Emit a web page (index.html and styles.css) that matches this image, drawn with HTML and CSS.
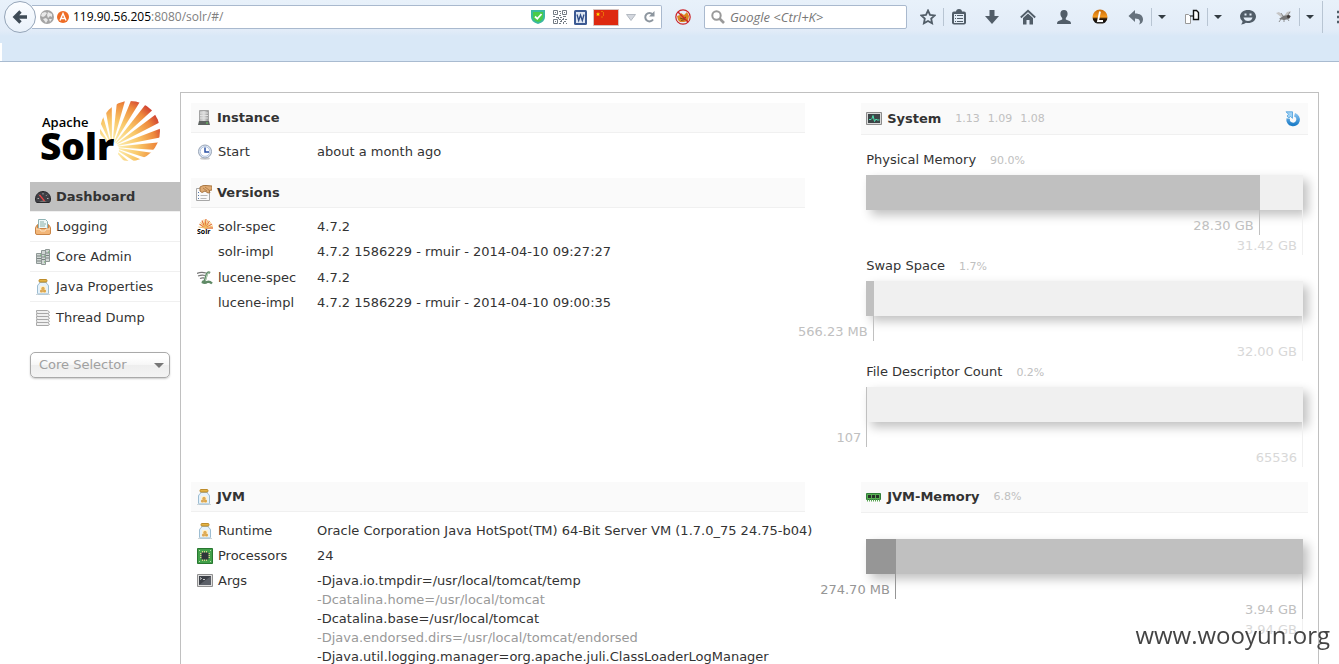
FILE: index.html
```html
<!DOCTYPE html>
<html lang="en">
<head>
<meta charset="utf-8">
<title>Solr Admin</title>
<link rel="stylesheet" href="styles.css">
</head>
<body>
<svg class="defs" aria-hidden="true">
  <defs>
    <linearGradient id="orangeBall" x1="0" y1="0" x2="0" y2="1"><stop offset="0" stop-color="#c86a08"/><stop offset=".5" stop-color="#f59a20"/><stop offset=".62" stop-color="#2a1605"/><stop offset=".85" stop-color="#111"/><stop offset="1" stop-color="#ddd"/></linearGradient>
    <linearGradient id="blueRing" x1="0" y1="0" x2="0" y2="1"><stop offset="0" stop-color="#7fbcec"/><stop offset="1" stop-color="#1f7fc9"/></linearGradient>
    <linearGradient id="server" x1="0" y1="0" x2="1" y2="0"><stop offset="0" stop-color="#b5b5b5"/><stop offset=".5" stop-color="#dedede"/><stop offset="1" stop-color="#8d8d8d"/></linearGradient>
  </defs>
  <symbol id="i-jar" viewBox="0 0 16 16"><path d="M1 15.500h14" stroke="#cfd6da"/><path d="M4.500 3.500h7v1q2 1 2 2.500v7q0 1-1 1h-9q-1 0-1-1V7q0-1.500 2-2.500z" fill="#e6f2fa" stroke="#9dbdd2"/><rect x="4" y=".5" width="8" height="2.500" rx="1" fill="#e3b345" stroke="#bd8c2b"/><path d="M5 7h6v7H5z" fill="#fff3d3"/><circle cx="8" cy="9.500" r="1.700" fill="#dfad55"/><circle cx="6.500" cy="12" r="1.600" fill="#d9a75a"/><circle cx="9.500" cy="12" r="1.600" fill="#dba64a"/></symbol>
  <symbol id="i-dash" viewBox="0 0 16 16"><path d="M.5 10C.5 5.500 4 2.500 8 2.500s7.500 3 7.500 7.500c0 2-.6 3.500-1.500 3.500H2C1.100 13.500.5 12 .5 10z" fill="#3f3f45" stroke="#28282c"/><path d="M2.500 9.500h1.500M12 9.500h1.500M8 4v1.500M4 5.800l1 1M12 5.800l-1 1" stroke="#aaa"/><path d="M4 13q4-3 8 0" fill="#777"/><path d="M4.500 6l5 6" stroke="#e44" stroke-width="1.200"/></symbol>
  <symbol id="i-log" viewBox="0 0 16 16"><path d="M3.500 .5h7l2 2v8h-9z" fill="#eef8f8" stroke="#8fb3b5"/><path d="M5 3h4M5 5h6M5 7h5" stroke="#8ab0a8"/><path d="M.5 8.500l2-3v4h11v-4l2 3v5.500q0 1.500-1.500 1.500H2Q.5 15.500.5 14z" fill="#f2b679" stroke="#c98547"/><path d="M1 10h4l1 2h4l1-2h4" fill="none" stroke="#fbe3c5"/></symbol>
  <symbol id="i-cores" viewBox="0 0 16 16"><g fill="#d0d6d4" stroke="#8f9896"><path d="M6.500 1.500h4v12h-4zM10.500 .5h4v12h-4zM1.500 4.500h5v10h-5z"/><path d="M6.500 5.500h4v10h-4z"/></g><path d="M2 7h4M2 9.500h4M2 12h4M7 8h3M7 10.500h3M11 4h3M11 6.500h3M11 9h3" stroke="#7a8381"/><path d="M5 6h1M9 7h1M9 13h1M13 3h1" stroke="#63b463"/></symbol>
  <symbol id="i-thread" viewBox="0 0 16 16"><g fill="#f0f0f0" stroke="#a8a8a8"><path d="M1.500 .5h11l2 1.500-1 1.500h-11l-1-1.500z"/><path d="M1.500 3.500h11l2 1.500-1 1.500h-11l-1-1.500z"/><path d="M1.500 6.500h11l2 1.500-1 1.500h-11l-1-1.500z"/><path d="M1.500 9.500h11l2 1.500-1 1.500h-11l-1-1.500z"/><path d="M1.500 12.500h11l2 1.500-1 1.500h-12z"/></g></symbol>
  <symbol id="i-server" viewBox="0 0 16 16"><path d="M3.500 .5h9v12h-9z" fill="url(#server)" stroke="#a4a4a4"/><path d="M4 3h8M4 5.500h8M4 8h8" stroke="#e2e2e2"/><path d="M3 11h10l1 4H2z" fill="#5e6361"/><path d="M10 13h2" stroke="#64d35c"/></symbol>
  <symbol id="i-clock" viewBox="0 0 16 16"><ellipse cx="8" cy="14.500" rx="5" ry="1.200" fill="#ccc"/><circle cx="8" cy="7.500" r="6.500" fill="#dfe9f7" stroke="#98a4b5"/><circle cx="8" cy="7.500" r="4.800" fill="#fff" stroke="#b7c6dd"/><path d="M8 3.500v4.500h4" fill="none" stroke="#2a50a4" stroke-width="1.500"/></symbol>
  <symbol id="i-versions" viewBox="0 0 16 16"><path d="M.5 3.500h13v12H.5z" fill="#fafafa" stroke="#a7a7a7"/><path d="M2 7.500h1M2 10.500h1M2 13.500h1" stroke="#57a"/><path d="M4.500 10.500h7M4.500 13.500h6" stroke="#b9b9b9"/><path d="M4 2q3-2 6-1.500l6 .5v4l-3 .5 1 2-2 .5-3-2-3 1.500-2-1.500z" fill="#dfab74" stroke="#a87642"/><path d="M7 3l4 3M9 2l4 3" stroke="#a87642" stroke-width=".8"/></symbol>
  <symbol id="i-lucene" viewBox="0 0 16 16"><path d="M0 3.500q4-2 9-.5M1 6q4-1.500 7-.5M3 8.500q2-1 4-.5" fill="none" stroke="#777" stroke-width="1.300"/><path d="M13 3q-2.500-1.500-3.500 2L8 10q-.5 2-3 2 3 1.500 5 0 2.500-1 5 1.500" fill="none" stroke="#5f8a66" stroke-width="2.400"/><path d="M12.500 3q-2-.5-2.500 2L8.500 10.500" fill="none" stroke="#cfe3d1" stroke-width=".8"/></symbol>
  <symbol id="i-cpu" viewBox="0 0 16 16"><path d="M.5 .5h15v15H.5z" fill="#42a04a" stroke="#287730"/><path d="M3 5.500h10M3 7.500h10M3 9.500h10M5.500 3v10M7.500 3v10M9.500 3v10" stroke="#d8d28a"/><path d="M4.500 4.500h7v7h-7z" fill="#30353a"/><path d="M2 2.500h1M13 2.500h1M2 13.500h1M13 13.500h1" stroke="#b5e3ad"/></symbol>
  <symbol id="i-term" viewBox="0 0 16 16"><path d="M.5 1.500h15v12H.5z" fill="#dedede" stroke="#919191"/><path d="M2 3h12v9H2z" fill="#3d4148"/><path d="M2 12L14 3v9z" fill="#5c6068"/><path d="M3 4.500l1.500 1L3 6.500M6 6.500h2" fill="none" stroke="#eee" stroke-width=".8"/></symbol>
  <symbol id="i-system" viewBox="0 0 16 16"><path d="M.5 1.500h15v12H.5z" fill="#dadada" stroke="#8b8b8b"/><path d="M2 3h12v9H2z" fill="#3d4548"/><path d="M3 8.500h2l1-1 1-3 1.500 6L10 8l1 1h2.500" fill="none" stroke="#4fe0b0"/></symbol>
  <symbol id="i-ram" viewBox="0 0 16 16"><path d="M.5 4.500h14v6H.5z" fill="#58ac53" stroke="#32803a"/><path d="M2 6h3v3H2zM6 6h3v3H6zM10 6h3v3h-3z" fill="#263128"/><path d="M1 11.500h14" stroke="#56a54f" stroke-width="2" stroke-dasharray="1 1"/></symbol>
  <symbol id="i-caret" viewBox="0 0 8 5"><path d="M0 0h8L4 4z" fill="#333c42"/></symbol>
</svg>

<header class="browser">
  <div class="toolbar">
    <button class="back" aria-label="Back"><svg viewBox="0 0 16 16"><path d="M15 8H3M8.500 2.500L3 8l5.500 5.500" fill="none" stroke="#3f4b56" stroke-width="3.400"/></svg></button>
    <div class="address">
      <svg class="s14" viewBox="0 0 14 14"><circle cx="7" cy="7" r="7" fill="#a4a4a4"/><path d="M2 3l3-1 2 1-2 3-2 1-2-1zM8 2l4 2v3l-2-1-2 2-1-3zM3 9l3-1 2 2-2 3zM9 9h3l-2 3z" fill="#e8e8e8"/></svg>
      <svg class="s12" viewBox="0 0 12 12"><circle cx="6" cy="6" r="6" fill="#ee6c25"/><path d="M3 9.500L6 2.500l3 7M4.500 7.500h3" fill="none" stroke="#fff" stroke-width="1.400"/></svg>
      <div class="url" role="textbox" contenteditable="true" spellcheck="false" aria-label="Address">119.90.56.205<span class="path">:8080/solr/#/</span></div>
      <svg class="s14" viewBox="0 0 14 14"><path d="M0 0h14v7q0 5-7 7-7-2-7-7z" fill="#3ab8a0"/><path d="M2 2h10v5q0 3.500-5 5-5-1.500-5-5z" fill="#4acb49"/><path d="M4 6.500l2.300 2.300L10.500 4" fill="none" stroke="#fff" stroke-width="1.800"/></svg>
      <svg class="s14 qr" viewBox="0 0 14 14"><g fill="none" stroke="#737b83"><path d="M.5 .5h4v4h-4zM9.500 .5h4v4h-4zM.5 9.500h4v4h-4z"/><path d="M2 2.500h1M11 2.500h1M2 11.500h1M6 1.500h2M7 3.500h1M6 5.500h2M0 6.500h2M3 7.500h3M7 7.500h2M10 6.500h3M6 9.500h2M9 9.500h2M12 9.500h2M7 11.500h2M11 11.500h2M6 13.500h2M10 13.500h1M13 13.500h1M10 8.500h1M5 8.500h1M8 10.500h1M10 12.500h1"/></g></svg>
      <svg class="word" viewBox="0 0 13 15"><rect width="13" height="15" rx="1.500" fill="#3c5a93"/><path d="M2 2h9v11H2z" fill="#dfe7f3"/><path d="M3 4.500l1.700 6L6.500 5l1.800 5.500 1.700-6" fill="none" stroke="#2f4d87" stroke-width="1.300"/></svg>
      <svg class="flag" viewBox="0 0 26 17"><path d="M.5 .5h25v16H.5z" fill="#de2910" stroke="#d6c4c2"/><path d="M5 3l.6 1.400H7L6 5.500l.4 1.500L5 6.200 3.600 7 4 5.500 3 4.400h1.400z" fill="#ffde00"/><path d="M8.500 2.500h1M10 4h1M10 6h1M8.500 8h1" stroke="#f5b400"/></svg>
      <svg class="drop" viewBox="0 0 10 7"><path d="M.5 .5h9L5 6.500z" fill="#d3d7de" stroke="#b4bac2"/></svg>
      <svg class="s12" viewBox="0 0 12 12"><path d="M9.500 3.300A4.200 4.200 0 1 0 10 8.500" fill="none" stroke="#8d969f" stroke-width="2"/><path d="M11.500 0v5.500H6z" fill="#8d969f"/></svg>
    </div>
    <button class="tool block" aria-label="Blocked content"><svg class="s16" viewBox="0 0 16 16"><path d="M2 7l3-1 1-2 3 2 3-3 2 4-1 5-4 1H5l-2-2z" fill="#dd851f"/><path d="M5 9l3 1 3-2M6 11.500l4-1" stroke="#7a4a19" fill="none"/><circle cx="8" cy="8" r="7.200" fill="none" stroke="#cb2229" stroke-width="1.200"/><path d="M3 3l10 10" stroke="#cb2229" stroke-width="1.400"/></svg></button>
    <label class="search"><svg class="s14" viewBox="0 0 14 14"><circle cx="5.500" cy="5.500" r="4.200" fill="none" stroke="#999" stroke-width="2"/><path d="M8.500 8.500L13 13" stroke="#999" stroke-width="2.600"/></svg><input type="text" placeholder="Google &lt;Ctrl+K&gt;" aria-label="Search"></label>
    <div class="group first">
      <button class="tool" aria-label="Bookmark"><svg class="s16" viewBox="0 0 16 16"><path d="M8 1.500l2 4.300 4.700.6-3.500 3.200.9 4.700L8 12l-4.100 2.300.9-4.700L1.300 6.400 6 5.800z" fill="none" stroke="#515d68" stroke-width="1.800"/></svg></button>
      <i class="rule"></i>
      <button class="tool" aria-label="Bookmarks list"><svg class="s16" viewBox="0 0 16 16"><rect x="1" y="2.500" width="14" height="13" rx="2" fill="#515d68"/><path d="M5 3q0-3 3-3t3 3z" fill="#515d68"/><path d="M3 5h10v9H3z" fill="#e3edf7"/><path d="M4 6.500h1M6 6.500h6M4 9.500h1M6 9.500h6M4 12.500h1M6 12.500h6" stroke="#515d68"/></svg></button>
    </div>
    <button class="tool wide" aria-label="Downloads"><svg class="s16" viewBox="0 0 16 16"><path d="M5.500 1h5v6H15l-7 8-7-8h4.500z" fill="#515d68"/></svg></button>
    <button class="tool wide" aria-label="Home"><svg class="s16" viewBox="0 0 16 16"><path d="M.8 8.500L8 1.800l7.200 6.700" fill="none" stroke="#515d68" stroke-width="1.800"/><path d="M3 9l5-4.500L13 9v6.500H9.500V11h-3v4.500H3z" fill="#515d68"/></svg></button>
    <button class="tool wide" aria-label="Account"><svg class="s16" viewBox="0 0 16 16"><path d="M8 1c2.500 0 3.600 1.500 3.600 3.700 0 2-1 3.300-1.800 4.300v1.500l4.200 1.700q1 .5 1 2.800H1q0-2.300 1-2.800l4.200-1.700V9C5.400 8 4.400 6.700 4.400 4.700 4.400 2.500 5.500 1 8 1z" fill="#515d68"/></svg></button>
    <button class="tool wide" aria-label="Extension"><svg class="s16" viewBox="0 0 16 16"><circle cx="8" cy="8" r="7.500" fill="url(#orangeBall)"/><path d="M8 2.500L6 12h5" fill="none" stroke="#fff" stroke-width="1.800"/></svg></button>
    <div class="group split">
      <button class="tool" aria-label="Undo"><svg class="s16" viewBox="0 0 16 16"><path d="M7 1v3.500c5 0 8 2 8 6 0 2.500-1.500 4.500-4 5 2-3 1-6-4-6V13L.5 7z" fill="#66727d"/></svg></button>
      <i class="rule"></i>
      <button class="tool caret" aria-label="Undo list"><svg viewBox="0 0 8 5"><use href="#i-caret"/></svg></button>
    </div>
    <div class="group split">
      <button class="tool" aria-label="Proxy"><svg class="s16" viewBox="0 0 16 16"><path d="M1.500 5.500h3l2 2v7h-5z" fill="#fff" stroke="#999"/><path d="M9.500 1.500h3l2 2v7h-5z" fill="#fff" stroke="#111" stroke-width="1.400"/><path d="M6 7h3" stroke="#222" stroke-width="1.200"/></svg></button>
      <i class="rule"></i>
      <button class="tool caret" aria-label="Proxy list"><svg viewBox="0 0 8 5"><use href="#i-caret"/></svg></button>
    </div>
    <button class="tool wide" aria-label="Chat"><svg class="s16" viewBox="0 0 16 16"><path d="M8 1c4.500 0 8 2.700 8 6.500S12.500 14 8 14q-1 0-2-.2Q4 15.500 1 15.500 2.500 14 2.500 12.300 0 10.500 0 7.500C0 3.700 3.500 1 8 1z" fill="#515d68"/><path d="M4.500 5.500h2M9.500 5.500h2" stroke="#e3edf7" stroke-width="2"/><path d="M3.500 8.500h9q-1 3.500-4.500 3.500T3.500 8.500z" fill="#e3edf7"/></svg></button>
    <div class="group split">
      <button class="tool" aria-label="Fly"><svg class="s16" viewBox="0 0 16 16"><path d="M5 8L0 4l3-1 5 4zM8 7l3-4 4-1-4 6z" fill="#c5c5c5"/><path d="M3 10l4-3 5-1 3 1-2 3-5 1z" fill="#777"/><path d="M5 10l-2 3M8 10v3M11 9l2 3M7 7L5 4M12 6l2-3" stroke="#777" stroke-width=".8"/><circle cx="12.500" cy="7.500" r="1.600" fill="#3f3a38"/></svg></button>
      <i class="rule"></i>
      <button class="tool caret" aria-label="Fly list"><svg viewBox="0 0 8 5"><use href="#i-caret"/></svg></button>
    </div>
    <i class="rule tall"></i>
    <button class="tool menu-button" aria-label="Menu"><svg class="s16" viewBox="0 0 16 16"><path d="M0 3h16M0 8h16M0 13h16" stroke="#515d68" stroke-width="2.400"/></svg></button>
  </div>
</header>

<main class="page">
  <aside class="sidebar">
    <svg class="logo" viewBox="0 0 150 72" role="img" aria-label="Apache Solr">
      <defs>
        <clipPath id="sun"><circle cx="100" cy="39" r="30"/></clipPath>
        <radialGradient id="heat" gradientUnits="userSpaceOnUse" cx="82" cy="55" r="58"><stop offset=".1" stop-color="#fdeeb0"/><stop offset=".45" stop-color="#f9c869"/><stop offset=".75" stop-color="#ee8a3c"/><stop offset="1" stop-color="#c5252d"/></radialGradient>
        <path id="ray" d="M82 55l75-6.200v12.400z"/>
        <mask id="rays" maskUnits="userSpaceOnUse" x="0" y="0" width="150" height="72">
          <g fill="#fff">
            <use href="#ray" transform="rotate(-128 82 55)"/><use href="#ray" transform="rotate(-111 82 55)"/><use href="#ray" transform="rotate(-95 82 55)"/><use href="#ray" transform="rotate(-79 82 55)"/><use href="#ray" transform="rotate(-63 82 55)"/><use href="#ray" transform="rotate(-47 82 55)"/><use href="#ray" transform="rotate(-32 82 55)"/><use href="#ray" transform="rotate(-16 82 55)"/><use href="#ray" transform="rotate(-1 82 55)"/><use href="#ray" transform="rotate(13 82 55)"/><use href="#ray" transform="rotate(28 82 55)"/><use href="#ray" transform="rotate(45 82 55)"/>
          </g>
          <circle cx="80" cy="58" r="9" fill="#000"/>
        </mask>
      </defs>
      <g clip-path="url(#sun)"><path d="M68 5h66v66H68z" fill="url(#heat)" mask="url(#rays)"/></g>
      <text class="logo-top" x="12" y="35">Apache</text>
      <text class="logo-name" x="10" y="68">Solr</text>
    </svg>
    <nav class="menu">
      <a href="#" class="active"><svg class="s16"><use href="#i-dash"/></svg>Dashboard</a>
      <a href="#"><svg class="s16"><use href="#i-log"/></svg>Logging</a>
      <a href="#"><svg class="s16"><use href="#i-cores"/></svg>Core Admin</a>
      <a href="#"><svg class="s16"><use href="#i-jar"/></svg>Java Properties</a>
      <a href="#"><svg class="s16"><use href="#i-thread"/></svg>Thread Dump</a>
    </nav>
    <div class="selector"><select aria-label="Core Selector"><option>Core Selector</option></select></div>
  </aside>

  <div class="content">
    <div class="upper-left">
      <section>
        <h2><svg class="s16"><use href="#i-server"/></svg>Instance</h2>
        <dl><dt><svg class="s16"><use href="#i-clock"/></svg>Start</dt><dd>about a month ago</dd></dl>
      </section>
      <section>
        <h2><svg class="s16"><use href="#i-versions"/></svg>Versions</h2>
        <dl><dt><svg class="s16" viewBox="0 0 16 16"><path d="M8 9L2.500 5M8 9L5 1.500M8 9l1-9M8 9l4.500-7M8 9l7-4M8 9l8 0" stroke="#e57a3c" stroke-width="1.300"/><path d="M8 9L1.500 8M8 9L3.500 3M8 9L7 .5M8 9l3-8M8 9l6-5.500M8 9l8-2" stroke="#f2bd64"/><text class="mini-solr" x="0" y="15">Solr</text></svg>solr-spec</dt><dd>4.7.2</dd>
        <dt><span class="s16"></span>solr-impl</dt><dd>4.7.2 1586229 - rmuir - 2014-04-10 09:27:27</dd></dl>
        <dl><dt><svg class="s16"><use href="#i-lucene"/></svg>lucene-spec</dt><dd>4.7.2</dd>
        <dt><span class="s16"></span>lucene-impl</dt><dd>4.7.2 1586229 - rmuir - 2014-04-10 09:00:35</dd></dl>
      </section>
    </div>

    <section class="gauges">
      <h2><svg class="s16"><use href="#i-system"/></svg>System<small><span>1.13</span><span>1.09</span><span>1.08</span></small>
        <button class="reload" aria-label="Reload"><svg class="s16" viewBox="0 0 16 16"><path d="M9.500 3.700A5 5 0 1 1 3.200 7.500" fill="none" stroke="url(#blueRing)" stroke-width="3.600"/><path d="M1 .8h6.500v6.500L5.500 5.500 3.800 7 2 5l1.500-1.700z" fill="#9fd2f5" stroke="#4b9edb" stroke-width=".8"/></svg></button></h2>
      <div class="gauge">
        <h3>Physical Memory<small>90.0%</small></h3>
        <div class="bar"><div class="used" style="width:90.07%"></div></div>
        <div class="marks"><div class="mark total"><span>31.42 GB</span></div><div class="mark" style="width:90.07%"><span>28.30 GB</span></div></div>
      </div>
      <div class="gauge">
        <h3>Swap Space<small>1.7%</small></h3>
        <div class="bar"><div class="used" style="width:1.73%"></div></div>
        <div class="marks"><div class="mark total"><span>32.00 GB</span></div><div class="mark" style="width:1.73%"><span>566.23 MB</span></div></div>
      </div>
      <div class="gauge">
        <h3>File Descriptor Count<small>0.2%</small></h3>
        <div class="bar"><div class="used" style="width:0.16%"></div></div>
        <div class="marks"><div class="mark total"><span>65536</span></div><div class="mark" style="width:0.16%"><span>107</span></div></div>
      </div>
    </section>

    <section class="jvm">
      <h2><svg class="s16"><use href="#i-jar"/></svg>JVM</h2>
      <dl><dt><svg class="s16"><use href="#i-jar"/></svg>Runtime</dt><dd>Oracle Corporation Java HotSpot(TM) 64-Bit Server VM (1.7.0_75 24.75-b04)</dd>
      <dt><svg class="s16"><use href="#i-cpu"/></svg>Processors</dt><dd>24</dd>
      <dt><svg class="s16"><use href="#i-term"/></svg>Args</dt>
      <dd><ul><li>-Djava.io.tmpdir=/usr/local/tomcat/temp</li><li>-Dcatalina.home=/usr/local/tomcat</li><li>-Dcatalina.base=/usr/local/tomcat</li><li>-Djava.endorsed.dirs=/usr/local/tomcat/endorsed</li><li>-Djava.util.logging.manager=org.apache.juli.ClassLoaderLogManager</li></ul></dd></dl>
    </section>

    <section class="gauges memory">
      <h2><svg class="s16"><use href="#i-ram"/></svg>JVM-Memory<small>6.8%</small></h2>
      <div class="gauge">
        <div class="bar"><div class="used" style="width:6.81%"></div></div>
        <div class="marks"><div class="mark max"><span>3.94 GB</span></div><div class="mark total"><span>3.94 GB</span></div><div class="mark" style="width:6.81%"><span>274.70 MB</span></div></div>
      </div>
    </section>
  </div>
</main>
<div class="watermark">www.wooyun.org</div>
</body>
</html>
```

FILE: styles.css
```css
* { box-sizing: border-box; }
html, body { height: 100%; }
body {
  margin: 0;
  display: flex;
  flex-direction: column;
  overflow: hidden;
  background: #fff;
  color: #333;
  font: 13px/20px Verdana, "DejaVu Sans", sans-serif;
}
h2, h3, dl, dd, ul { margin: 0; padding: 0; }
ul { list-style: none; }
button { border: 0; padding: 0; background: none; }
svg { display: block; flex: none; }
.defs { position: absolute; width: 0; height: 0; }
.s16 { width: 16px; height: 16px; flex: none; }
.s14 { width: 14px; height: 14px; }
.s12 { width: 12px; height: 12px; }

/* Browser chrome */
.browser {
  flex: none;
  padding: 1px 0 28px;
  border-bottom: 1px solid #a9bbd0;
  background:
    linear-gradient(#fff, #fff) 0 100% / 2px 18px no-repeat,
    linear-gradient(#e8f1fa, #e2ecf8 30px, #d9e8f7 36px, #d9e8f7);
  font-family: "Segoe UI", "Open Sans", sans-serif;
}
.toolbar { display: flex; align-items: center; height: 32px; padding-left: 4px; overflow: hidden; }
.back {
  display: grid; place-items: center;
  width: 32px; height: 32px;
  flex: none;
  z-index: 1;
  border: 1px solid #95a5b8;
  border-radius: 50%;
  background: linear-gradient(#fbfdff, #e9f1fa);
}
.back svg { width: 16px; height: 16px; }
.address {
  display: flex; align-items: center;
  flex: 1;
  height: 24px;
  margin-left: -4px;
  padding: 0 6px 0 8px;
  border: 1px solid #a9b9ce;
  border-left: 0;
  border-radius: 0 2px 2px 0;
  background: #fff;
}
.address .s12 { margin-left: 3px; }
.url { flex: 1; padding-left: 4px; color: #000; font-size: 12px; outline: 0; white-space: nowrap; }
.path { color: #808080; }
.address .qr { margin-left: 8px; }
.word { width: 13px; height: 15px; margin-left: 7px; }
.flag { width: 26px; height: 17px; margin-left: 6px; }
.drop { width: 10px; height: 7px; margin: 0 4px 0 7px; }
.tool { display: grid; place-items: center; width: 30px; height: 28px; flex: none; }
.wide { width: 36px; }
.block { width: 42px; }
.search {
  display: flex; align-items: center;
  width: 203px; height: 24px;
  flex: none;
  padding: 0 6px;
  border: 1px solid #a9b9ce;
  border-radius: 2px;
  background: #fff;
}
.search input {
  width: 100%;
  min-width: 0;
  padding: 0 0 0 5px;
  border: 0;
  outline: 0;
  background: none;
  font: italic 13px/20px "Segoe UI", "Open Sans", sans-serif;
}
.search input::placeholder { color: #777; }
.group { display: flex; align-items: center; flex: none; }
.first { margin-left: 6px; }
.split { margin: 0 3px; }
.rule { width: 1px; height: 18px; flex: none; background: #b8c5d3; }
.tall { height: 32px; }
.caret { width: 19px; }
.caret svg { width: 8px; height: 5px; }
.menu-button { width: 16px; overflow: hidden; justify-items: end; }
.menu-button svg { margin-right: -14px; }

/* Admin page */
.page { display: flex; flex: 1; padding: 30px 20px 0 30px; }
.sidebar { width: 150px; flex: none; }
.logo { width: 150px; height: 72px; margin-bottom: 18px; overflow: visible; }
.logo-top { font: 600 13px "Open Sans", sans-serif; }
.logo-name { font: 800 37px "Open Sans", sans-serif; }
.mini-solr { font: bold 7px "Open Sans", sans-serif; }
.menu a {
  display: flex; align-items: center;
  gap: 5px;
  height: 30px;
  padding: 1px 0 0 5px;
  border-bottom: 1px solid #f0f0f0;
  color: #333;
  text-decoration: none;
}
.menu .active { background: #c0c0c0; font-weight: bold; }
.menu a:last-child { border-bottom: 0; }
.selector { position: relative; width: 140px; margin-top: 20px; }
.selector::after {
  content: "";
  position: absolute;
  top: 11px; right: 6px;
  border: 5px solid transparent;
  border-top-color: #777;
  border-bottom: 0;
  pointer-events: none;
}
.selector select {
  display: block;
  width: 100%; height: 26px;
  padding: 0 8px;
  appearance: none;
  border: 1px solid #aaa;
  border-radius: 5px;
  background: linear-gradient(#fff 20%, #f6f6f6 50%, #eee 52%, #f4f4f4);
  box-shadow: 0 1px 2px #ccc;
  color: #a0a0a0;
  font: inherit;
}
.content {
  display: grid;
  grid-template-columns: 55% 40%;
  grid-template-rows: auto 1fr;
  justify-content: space-between;
  align-items: start;
  row-gap: 14px;
  flex: 1;
  min-width: 0;
  min-height: 0;
  padding: 10px;
  border: 1px solid #c0c0c0;
  border-bottom: 0;
}
h2 {
  display: flex; align-items: center;
  gap: 5px;
  height: 30px;
  padding: 1px 5px 0;
  border-bottom: 1px solid #f0f0f0;
  background: #fafafa;
  font-size: 13px;
}
.gauges h2 { height: 32px; padding-top: 0; }
.gauges.memory h2 { height: 31px; }
h2 small, h3 small { color: #c0c0c0; font-size: 11px; font-weight: normal; }
h2 small { display: flex; gap: 8px; margin-left: 9px; }
h3 small { margin-left: 14px; }
.reload { margin-left: auto; margin-right: 2px; }
section + section { margin-top: 14px; }
.content > section { margin-top: 0; }
dl {
  display: grid;
  grid-template-columns: 120px 1fr;
  grid-auto-rows: minmax(25px, auto);
  padding-left: 6px;
}
h2 + dl { padding-top: 6px; }
dl + dl { padding-top: 1px; }
dt { display: flex; align-items: center; gap: 5px; height: 25px; }
dd { line-height: 25px; white-space: nowrap; }
dd ul { padding-top: 3px; }
dd li { line-height: 19px; }
dd li:nth-child(even) { color: #999; }
.gauge { padding: 0 5px 1px; }
.gauge h3 { height: 25px; font-size: 13px; font-weight: normal; }
h2 + .gauge { padding-top: 15px; }
.memory h2 + .gauge { padding-top: 26px; }
.bar { height: 35px; background: #f0f0f0; box-shadow: 5px 5px 10px #c0c0c0; }
.used { min-width: 1px; height: 100%; background: #c0c0c0; }
.marks { display: grid; color: #c0c0c0; line-height: 19px; position: relative; }
.mark {
  grid-area: 1 / 1;
  align-self: start;
  display: flex; justify-content: flex-end;
  min-width: 1px;
  padding-top: 6px;
  border-right: 1px solid #c0c0c0;
  white-space: nowrap;
}
.mark span { flex: none; margin-right: 5px; }
.total { padding-top: 26px; border-color: #f0f0f0; color: #d8d8d8; }
.max { padding-top: 46px; border-color: #f0f0f0; color: #d8d8d8; }
.memory .bar { background: #c0c0c0; }
.memory .used { background: #969696; }
.memory .mark { border-color: #969696; color: #969696; }
.memory .total { border-color: #c0c0c0; color: #c0c0c0; }
.memory .max { border-color: #f0f0f0; color: #d8d8d8; }
.watermark {
  position: fixed;
  right: 9px; bottom: 12px;
  color: #444;
  font: 24px/34px "Segoe UI", "Open Sans", sans-serif;
}
```
